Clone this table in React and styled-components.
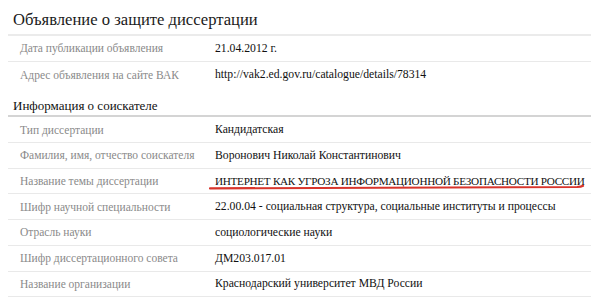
import React from 'react';
import styled, {createGlobalStyle} from 'styled-components';

const GlobalStyle = createGlobalStyle`
    html, body {
        margin: 0;
        padding: 0;
        background: #fff;
    }
`;

const Page = styled.div`
    width: 600px;
    height: 300px;
    overflow: hidden;
    padding: 0 9px 0 8px;
    box-sizing: border-box;
    font-family: "Liberation Serif", "Times New Roman", serif;
    color: #222;
`;

const Title = styled.h1`
    margin: 0;
    height: 36px;
    box-sizing: border-box;
    padding: 10px 0 0 5px;
    font-family: inherit;
    font-size: 16.6px;
    font-weight: normal;
    color: #1a1a1a;
    border-bottom: 2px solid #ebebeb;
`;

const SectionTitle = styled.h2`
    margin: 0;
    height: 30px;
    box-sizing: border-box;
    padding: 11px 0 0 5px;
    font-family: inherit;
    font-size: 13px;
    font-weight: normal;
    color: #111;
    border-bottom: 2px solid #d4d4d4;
`;

const Table = styled.div`
    display: flex;
    flex-direction: column;
`;

const Row = styled.div`
    display: grid;
    grid-template-columns: 207px 1fr;
    align-items: center;
    height: 25.7px;
    box-sizing: border-box;
    border-bottom: ${props => (props.last ? 'none' : '1px solid #e9e9e9')};
`;

const Label = styled.div`
    padding-left: 12px;
    font-size: 11.5px;
    color: #8a8a8a;
    white-space: nowrap;
`;

const Value = styled.div`
    position: relative;
    font-size: ${props => (props.caps ? 11.2 : 11.7)}px;
    letter-spacing: ${props => (props.caps ? '-0.3px' : 'normal')};
    color: #111;
    white-space: nowrap;
`;

const Mark = styled.svg`
    position: absolute;
    left: -6px;
    top: 9px;
    width: 376px;
    height: 6px;
    overflow: visible;
`;

const Scribble = () => (
    <Mark viewBox="0 0 376 6">
        <path d="M1 4.4 C 90 3.8, 220 3.6, 368 3 C 371 2.9, 373 2.4, 374 1.8" stroke="#d8352c" strokeWidth="2.2" fill="none" strokeLinecap="round"/>
    </Mark>
);

const announcement = [
    ['Дата публикации объявления', '21.04.2012 г.'],
    ['Адрес объявления на сайте ВАК', 'http://vak2.ed.gov.ru/catalogue/details/78314'],
];

const applicant = [
    ['Тип диссертации', 'Кандидатская'],
    ['Фамилия, имя, отчество соискателя', 'Воронович Николай Константинович'],
    ['Название темы диссертации', 'ИНТЕРНЕТ КАК УГРОЗА ИНФОРМАЦИОННОЙ БЕЗОПАСНОСТИ РОССИИ', true],
    ['Шифр научной специальности', '22.00.04 - социальная структура, социальные институты и процессы'],
    ['Отрасль науки', 'социологические науки'],
    ['Шифр диссертационного совета', 'ДМ203.017.01'],
    ['Название организации', 'Краснодарский университет МВД России'],
];

const App = () => {
    return (
        <Page>
            <GlobalStyle/>
            <Title>Объявление о защите диссертации</Title>
            <Table>
                {announcement.map(([label, value], i) => (
                    <Row key={i} last={i === announcement.length - 1}>
                        <Label>{label}</Label>
                        <Value>{value}</Value>
                    </Row>
                ))}
            </Table>
            <SectionTitle>Информация о соискателе</SectionTitle>
            <Table>
                {applicant.map(([label, value, marked], i) => (
                    <Row key={i}>
                        <Label>{label}</Label>
                        <Value caps={marked}>
                            {value}
                            {marked && <Scribble/>}
                        </Value>
                    </Row>
                ))}
            </Table>
        </Page>
    );
};

export default App;
